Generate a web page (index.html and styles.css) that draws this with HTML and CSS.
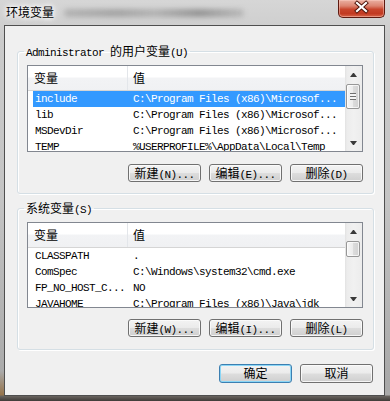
FILE: index.html
```html
<!DOCTYPE html>
<html lang="zh-CN">
<head>
<meta charset="utf-8">
<title>环境变量</title>
<link rel="stylesheet" href="styles.css">
</head>
<body>
<div class="window">
  <div class="titlebar">
    <span class="title">环境变量</span>
    <span class="ghost" aria-hidden="true"></span>
    <button class="close" aria-label="关闭">
      <svg width="47" height="18" viewBox="0 0 47 18">
        <path d="M19 4 L28 12 M28 4 L19 12" stroke="#4b1208" stroke-width="4" stroke-linecap="square" fill="none"/>
        <path d="M19 4 L28 12 M28 4 L19 12" stroke="#ffffff" stroke-width="2.2" stroke-linecap="square" fill="none"/>
      </svg>
    </button>
  </div>
  <div class="client">
    <fieldset class="group g1">
      <legend><span class="m">Administrator </span><span class="c">的用户变量</span><span class="m">(U)</span></legend>
      <div class="group-in">
        <div class="list l1">
          <div class="list-body">
            <div class="list-head"><span class="h1 c">变量</span><span class="h2 c">值</span></div>
            <div class="row sel"><span class="k">include</span><span class="v">C:\Program Files (x86)\Microsof...</span></div>
            <div class="row"><span class="k">lib</span><span class="v">C:\Program Files (x86)\Microsof...</span></div>
            <div class="row"><span class="k">MSDevDir</span><span class="v">C:\Program Files (x86)\Microsof...</span></div>
            <div class="row"><span class="k">TEMP</span><span class="v">%USERPROFILE%\AppData\Local\Temp</span></div>
          </div>
          <div class="scroll">
            <span class="arrow up"></span>
            <span class="thumb grip"></span>
            <span class="spacer"></span>
            <span class="arrow down"></span>
          </div>
        </div>
        <div class="btnrow">
          <button class="btn"><span class="c">新建</span>(N)...</button>
          <button class="btn"><span class="c">编辑</span>(E)...</button>
          <button class="btn"><span class="c">删除</span>(D)</button>
        </div>
      </div>
    </fieldset>

    <fieldset class="group g2">
      <legend><span class="c">系统变量</span><span class="m">(S)</span></legend>
      <div class="group-in">
        <div class="list l2">
          <div class="list-body">
            <div class="list-head"><span class="h1 c">变量</span><span class="h2 c">值</span></div>
            <div class="row"><span class="k">CLASSPATH</span><span class="v">.</span></div>
            <div class="row"><span class="k">ComSpec</span><span class="v">C:\Windows\system32\cmd.exe</span></div>
            <div class="row"><span class="k">FP_NO_HOST_C...</span><span class="v">NO</span></div>
            <div class="row"><span class="k">JAVAHOME</span><span class="v">C:\Program Files (x86)\Java\jdk</span></div>
          </div>
          <div class="scroll">
            <span class="arrow up"></span>
            <span class="thumb small"></span>
            <span class="spacer"></span>
            <span class="arrow down"></span>
          </div>
        </div>
        <div class="btnrow">
          <button class="btn"><span class="c">新建</span>(W)...</button>
          <button class="btn"><span class="c">编辑</span>(I)...</button>
          <button class="btn"><span class="c">删除</span>(L)</button>
        </div>
      </div>
    </fieldset>

    <div class="dlg">
      <button class="btn big default"><span class="c">确定</span></button>
      <button class="btn big"><span class="c">取消</span></button>
    </div>
  </div>
</div>
</body>
</html>
```

FILE: styles.css
```css
* { box-sizing: border-box; }
html, body { margin: 0; padding: 0; }
body {
  width: 390px;
  height: 401px;
  overflow: hidden;
  font-family: "Liberation Mono", "Noto Sans CJK SC", monospace;
  font-size: 11px;
  color: #000;
}

.c {
  font-family: "Noto Sans CJK SC", sans-serif;
  font-size: 12px;
  letter-spacing: 0;
}
.m {
  font-family: "Liberation Mono", monospace;
  font-size: 11px;
  letter-spacing: -0.6px;
}

.window {
  width: 390px;
  height: 401px;
  display: flex;
  flex-direction: column;
  background:
    linear-gradient(to bottom, rgba(0,0,0,0) 395px, #6a6560 396px, #3f3b38 401px),
    radial-gradient(ellipse 40px 30px at 0 100%, rgba(140,90,30,0.85), rgba(140,90,30,0) 100%),
    linear-gradient(to bottom, #d6d6d6 0, #cbcbcb 40px, #c4c4c4 200px, #a9a9a9 380px);
}

.titlebar {
  height: 25px;
  display: flex;
  align-items: flex-start;
  flex-shrink: 0;
}
.title {
  font-family: "Noto Sans CJK SC", sans-serif;
  font-size: 12px;
  line-height: 16px;
  padding: 4px 0 0 6px;
  color: #000;
  text-shadow: 0 0 4px #fff, 0 0 6px #fff, 0 0 8px #fff;
}
.ghost {
  width: 180px;
  height: 8px;
  margin: 9px 0 0 10px;
  border-radius: 4px;
  background: linear-gradient(to right, rgba(90,90,90,0.25), rgba(80,80,80,0.35) 30%, rgba(90,90,90,0.25) 50%, rgba(60,60,60,0.4) 75%, rgba(90,90,90,0.2));
  filter: blur(2.5px);
}
.close {
  margin-left: auto;
  margin-right: 5px;
  width: 47px;
  height: 18px;
  padding: 0;
  border: 1px solid #5e1a10;
  border-top: 0;
  border-radius: 0 0 5px 5px;
  background: linear-gradient(to bottom, #eab0a2 0, #dc8470 35%, #c8452c 55%, #c23a22 80%, #d8654a 100%);
  box-shadow: inset 0 0 0 1px rgba(255,210,200,0.45);
  display: block;
  flex-shrink: 0;
}
.close svg { display: block; margin: -1px 0 0 -1px; }

.client {
  margin-left: 4px;
  width: 381px;
  height: 371px;
  border: 1px solid #4f4f4f;
  background: #f0f0f0;
  display: flex;
  flex-direction: column;
}

.group {
  margin: 18px 10px 0 12px;
  padding: 0;
  border: 1px solid #d5dfe5;
  border-radius: 3px;
  box-shadow: inset 1px 1px 0 #fff, 1px 1px 0 #fff;
  min-width: 0;
}
.g2 { margin-top: 7px; }
.group legend {
  margin-left: 6px;
  padding: 0 2px;
  height: 14px;
  line-height: 14px;
  white-space: nowrap;
}
.group-in { padding: 7px 10px 11px 9px; }
.g2 .group-in { padding-bottom: 12px; }

.list {
  display: flex;
  height: 87px;
  border: 1px solid #828790;
  background: #fff;
}
.l2 { height: 86px; }
.list-body {
  flex: 1;
  min-width: 0;
  overflow: hidden;
}
.list-head {
  display: flex;
  height: 25px;
  border-bottom: 1px solid #d5d5d5;
  background: linear-gradient(to bottom, #ffffff 0, #ffffff 46%, #f2f3f5 50%, #f0f1f3 100%);
}
.h1 {
  width: 100px;
  padding-left: 6px;
  line-height: 24px;
  border-right: 1px solid #e3e6ea;
}
.h2 {
  padding-left: 5px;
  line-height: 24px;
}
.row {
  display: flex;
  height: 16px;
  line-height: 16px;
  margin-left: 5px;
  white-space: nowrap;
  letter-spacing: -0.6px;
}
.row .k {
  width: 98px;
  padding-left: 2px;
  flex-shrink: 0;
  overflow: hidden;
}
.row .v { padding-left: 2px; }
.sel { background: #3399ff; color: #fff; }

.scroll {
  width: 17px;
  flex-shrink: 0;
  display: flex;
  flex-direction: column;
  background: linear-gradient(to right, #e2e2e2 0, #ececec 2px, #f1f1f1 50%, #ececec 100%);
}
.arrow {
  height: 17px;
  display: flex;
  align-items: center;
  justify-content: center;
  flex-shrink: 0;
}
.arrow::before {
  content: "";
  width: 1px;
  height: 0;
  border-left: 3px solid transparent;
  border-right: 3px solid transparent;
}
.up::before { border-bottom: 4px solid #3a3a3a; margin-top: 1px; }
.down::before { border-top: 4px solid #3a3a3a; }
.thumb {
  width: 14px;
  height: 25px;
  margin: 1px 0 0 1px;
  border: 1px solid #979797;
  border-radius: 2px;
  background: linear-gradient(to right, #f6f6f6 0, #ececec 50%, #dcdcdc 51%, #d2d2d2 100%);
  box-shadow: inset 0 0 0 1px rgba(255,255,255,0.7);
  display: flex;
  align-items: center;
  justify-content: center;
  flex-shrink: 0;
}
.thumb.small { height: 16px; }
.grip::after {
  content: "";
  width: 6px;
  height: 7px;
  background: repeating-linear-gradient(to bottom, #6f6f6f 0, #6f6f6f 1px, #f4f4f4 1px, #f4f4f4 3px);
}
.spacer { flex: 1; }

.btnrow {
  display: flex;
  justify-content: flex-end;
  gap: 8px;
  margin-top: 12px;
}
.g2 .btnrow { margin-top: 11px; }
.btn {
  width: 73px;
  height: 18px;
  padding: 0;
  border: 1px solid #707070;
  border-radius: 3px;
  background: linear-gradient(to bottom, #f3f3f3 0, #ebebeb 48%, #dddddd 52%, #cfcfcf 100%);
  box-shadow: inset 0 0 0 1px rgba(252,252,252,0.85);
  font-family: "Liberation Mono", monospace;
  font-size: 11px;
  letter-spacing: -0.6px;
  line-height: 15px;
  color: #000;
  white-space: nowrap;
  text-align: center;
}
.btn .c { line-height: 15px; }
.big { height: 19px; }
.default {
  border-color: #3c7fb1;
  box-shadow: inset 0 0 0 1px #8ad6f6;
}

.dlg {
  display: flex;
  justify-content: flex-end;
  gap: 8px;
  margin: 14px 11px 0 0;
}
```
